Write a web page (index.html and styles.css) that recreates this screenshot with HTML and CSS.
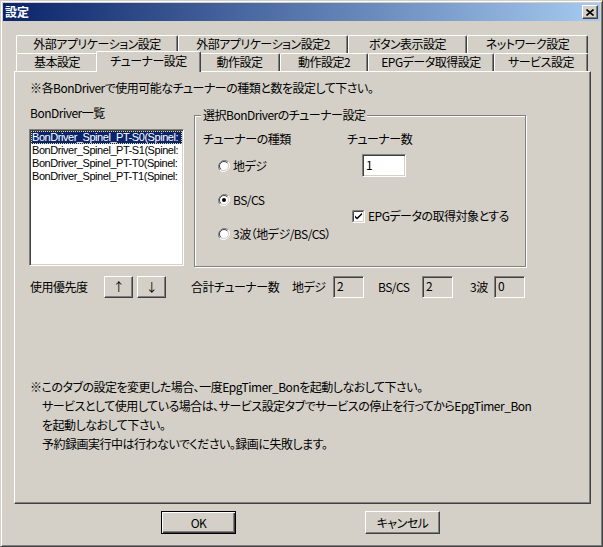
FILE: index.html
```html
<!DOCTYPE html>
<html lang="ja">
<head>
<meta charset="utf-8">
<title>設定</title>
<link rel="stylesheet" href="styles.css">
</head>
<body>
<div class="window">
  <div class="titlebar">
    <span class="title">設定</span>
    <div class="close"><svg width="8" height="7" viewBox="0 0 8 7"><path d="M0.5 0.5 L7.5 6.5 M7.5 0.5 L0.5 6.5" stroke="#000" stroke-width="1.6" fill="none"/></svg></div>
  </div>
  <div class="client">
    <div class="tabctl">
      <div class="tabrow">
        <div class="tab t-ext1">外部アプリケーション設定</div>
        <div class="tab t-ext2">外部アプリケーション設定2</div>
        <div class="tab t-btn">ボタン表示設定</div>
        <div class="tab t-net">ネットワーク設定</div>
      </div>
      <div class="tabrow">
        <div class="tab t-basic">基本設定</div>
        <div class="tab t-tuner selected">チューナー設定</div>
        <div class="tab t-act">動作設定</div>
        <div class="tab t-act2">動作設定2</div>
        <div class="tab t-epg">EPGデータ取得設定</div>
        <div class="tab t-svc">サービス設定</div>
      </div>
      <div class="panel">
        <div class="intro">※各BonDriverで使用可能なチューナーの種類と数を設定して下さい。</div>
        <div class="main">
          <div class="leftcol">
            <div class="label">BonDriver一覧</div>
            <div class="listbox">
              <div class="item sel">BonDriver_Spinel_PT-S0(Spinel:</div>
              <div class="item">BonDriver_Spinel_PT-S1(Spinel:</div>
              <div class="item">BonDriver_Spinel_PT-T0(Spinel:</div>
              <div class="item">BonDriver_Spinel_PT-T1(Spinel:</div>
            </div>
          </div>
          <div class="group">
            <div class="legend">選択BonDriverのチューナー設定</div>
            <div class="gcol gleft">
              <div class="label">チューナーの種類</div>
              <div class="radio r1">
                <svg width="12" height="12" viewBox="0 0 12 12"><path d="M10.2 1.8 A6 6 0 0 0 1.8 10.2" fill="none" stroke="#808080"/><path d="M1.8 10.2 A6 6 0 0 0 10.2 1.8" fill="none" stroke="#fff"/><circle cx="6" cy="6" r="4.5" fill="#fff"/><path d="M9.2 2.8 A4.5 4.5 0 0 0 2.8 9.2" fill="none" stroke="#404040"/><path d="M2.8 9.2 A4.5 4.5 0 0 0 9.2 2.8" fill="none" stroke="#d4d0c8"/></svg>
                <span>地デジ</span>
              </div>
              <div class="radio">
                <svg width="12" height="12" viewBox="0 0 12 12"><path d="M10.2 1.8 A6 6 0 0 0 1.8 10.2" fill="none" stroke="#808080"/><path d="M1.8 10.2 A6 6 0 0 0 10.2 1.8" fill="none" stroke="#fff"/><circle cx="6" cy="6" r="4.5" fill="#fff"/><path d="M9.2 2.8 A4.5 4.5 0 0 0 2.8 9.2" fill="none" stroke="#404040"/><path d="M2.8 9.2 A4.5 4.5 0 0 0 9.2 2.8" fill="none" stroke="#d4d0c8"/><circle cx="6" cy="6" r="2" fill="#000"/></svg>
                <span>BS/CS</span>
              </div>
              <div class="radio">
                <svg width="12" height="12" viewBox="0 0 12 12"><path d="M10.2 1.8 A6 6 0 0 0 1.8 10.2" fill="none" stroke="#808080"/><path d="M1.8 10.2 A6 6 0 0 0 10.2 1.8" fill="none" stroke="#fff"/><circle cx="6" cy="6" r="4.5" fill="#fff"/><path d="M9.2 2.8 A4.5 4.5 0 0 0 2.8 9.2" fill="none" stroke="#404040"/><path d="M2.8 9.2 A4.5 4.5 0 0 0 9.2 2.8" fill="none" stroke="#d4d0c8"/></svg>
                <span>3波（地デジ/BS/CS）</span>
              </div>
            </div>
            <div class="gcol gright">
              <div class="label">チューナー数</div>
              <div class="edit white">1</div>
              <div class="check">
                <svg width="13" height="13" viewBox="0 0 13 13"><rect x="0" y="0" width="13" height="13" fill="#fff"/><path d="M0.5 12.5 V0.5 H12.5" fill="none" stroke="#808080"/><path d="M1.5 11.5 V1.5 H11.5" fill="none" stroke="#404040"/><path d="M0.5 12.5 H12.5 V0.5" fill="none" stroke="#fff"/><path d="M1.5 11.5 H11.5 V1.5" fill="none" stroke="#d4d0c8"/><path d="M3 5.5 L5 7.5 L10 2.8 V4.8 L5 9.5 L3 7.5 Z" fill="#000"/></svg>
                <span>EPGデータの取得対象とする</span>
              </div>
            </div>
          </div>
        </div>
        <div class="bottomrow">
          <span class="c-prio">使用優先度</span>
          <div class="btn small">↑</div>
          <div class="btn small down">↓</div>
          <span class="c-total">合計チューナー数</span>
          <span class="c-tr">地デジ</span>
          <div class="edit count">2</div>
          <span class="c-bs">BS/CS</span>
          <div class="edit count">2</div>
          <span class="c-3">3波</span>
          <div class="edit count">0</div>
        </div>
        <div class="notes">
          <div>※このタブの設定を変更した場合、一度EpgTimer_Bonを起動しなおして下さい。</div>
          <div class="indent">サービスとして使用している場合は、サービス設定タブでサービスの停止を行ってからEpgTimer_Bon</div>
          <div class="indent">を起動しなおして下さい。</div>
          <div class="indent">予約録画実行中は行わないでください。録画に失敗します。</div>
        </div>
      </div>
    </div>
    <div class="buttons">
      <div class="btn dlg default">OK</div>
      <div class="btn dlg cancel">キャンセル</div>
    </div>
  </div>
</div>
</body>
</html>
```

FILE: styles.css
```css
* { box-sizing: border-box; }
html, body { margin: 0; padding: 0; }
body {
  background: #d4d0c8;
  font-family: "Noto Sans CJK JP", sans-serif;
  font-size: 12px;
  line-height: 14px;
  letter-spacing: -0.5px;
  color: #000;
  font-feature-settings: "palt";
}

.window {
  width: 603px;
  height: 547px;
  border: 1px solid;
  border-color: #d4d0c8 #404040 #404040 #d4d0c8;
  box-shadow: inset 1px 1px #fff, inset -1px -1px #808080;
  padding: 2px;
  background: #d4d0c8;
  display: flex;
  flex-direction: column;
}

.titlebar {
  height: 18px;
  flex: none;
  background: linear-gradient(to right, #0a246a, #a6caf0);
  display: flex;
  align-items: center;
  justify-content: space-between;
  padding: 0 2px 0 2px;
}
.title {
  color: #fff;
  font-weight: bold;
  font-size: 12px;
  letter-spacing: 0;
}
.close {
  width: 16px;
  height: 14px;
  background: #d4d0c8;
  border: 1px solid;
  border-color: #fff #404040 #404040 #fff;
  box-shadow: inset -1px -1px #808080;
  display: flex;
  align-items: center;
  justify-content: center;
}
.close svg { display: block; }

.client {
  flex: 1;
  padding: 14px 0 0 11px;
  display: flex;
  flex-direction: column;
}

.tabctl {
  width: 577px;
  display: flex;
  flex-direction: column;
}
.tabrow {
  display: flex;
  height: 18px;
  padding: 0 3px 0 2px;
}
.tab {
  height: 18px;
  border-top: 1px solid #fff;
  border-left: 1px solid #fff;
  border-right: 1px solid #404040;
  box-shadow: inset -1px 0 #808080;
  border-radius: 2px 2px 0 0;
  text-align: center;
  line-height: 16px;
  white-space: nowrap;
  background: #d4d0c8;
}
.t-ext1 { width: 162px; }
.t-ext2 { width: 170px; }
.t-btn { width: 119px; }
.t-net { width: 121px; }
.t-basic { width: 82px; }
.t-tuner { width: 101px; }
.t-act { width: 81px; }
.t-act2 { width: 88px; }
.t-epg { width: 126px; }
.t-svc { width: 94px; }
.tab.selected {
  position: relative;
  z-index: 1;
  width: 105px;
  height: 21px;
  margin: -2px -2px 0 -2px;
  line-height: 18px;
}

.panel {
  height: 433px;
  border: 1px solid;
  border-color: #fff #404040 #404040 #fff;
  box-shadow: inset -1px -1px #808080;
  padding: 9px 0 0 15px;
}

.main {
  display: flex;
  margin-top: 11px;
}
.leftcol {
  width: 155px;
  margin-left: -1px;
}
.leftcol .label { padding-left: 1px; }
.listbox {
  margin-top: 9px;
  width: 155px;
  height: 137px;
  background: #fff;
  border: 1px solid;
  border-color: #808080 #fff #fff #808080;
  box-shadow: inset 1px 1px #404040, inset -1px -1px #d4d0c8;
  padding: 1px 1px;
  overflow: hidden;
  font-family: "Liberation Sans", sans-serif;
  font-size: 11px;
  letter-spacing: -0.45px;
}
.item {
  height: 13px;
  line-height: 13px;
  white-space: nowrap;
  padding-left: 1px;
  overflow: hidden;
}
.item.sel {
  background: #0a246a;
  color: #fff;
  outline: 1px dotted #e8d890;
  outline-offset: -1px;
}

.group {
  position: relative;
  margin: 9px 0 0 10px;
  width: 332px;
  height: 152px;
  border: 1px solid #808080;
  box-shadow: inset 1px 1px #fff, 1px 1px #fff;
  padding: 16px 0 0 8px;
  display: flex;
}
.legend {
  position: absolute;
  top: -8px;
  left: 6px;
  padding: 0 2px;
  background: #d4d0c8;
}
.gleft { width: 144px; }
.radio {
  display: flex;
  align-items: center;
  gap: 3px;
  height: 14px;
  margin: 20px 0 0 15px;
}
.radio.r1 { margin-top: 13px; }
.radio svg { display: block; flex: none; }
.gright { flex: 1; }
.edit {
  border: 1px solid;
  border-color: #808080 #fff #fff #808080;
  box-shadow: inset 1px 1px #404040, inset -1px -1px #d4d0c8;
  background: #d4d0c8;
  padding: 3px 0 0 3px;
  line-height: 14px;
}
.edit.white {
  background: #fff;
  width: 44px;
  height: 23px;
  margin: 8px 0 0 15px;
}
.check {
  display: flex;
  align-items: center;
  gap: 3px;
  height: 14px;
  margin: 32px 0 0 5px;
}
.check svg { display: block; flex: none; }

.bottomrow {
  display: flex;
  align-items: center;
  height: 22px;
  margin-top: 9px;
}
.bottomrow span { white-space: nowrap; }
.c-prio { width: 74px; }
.c-total { width: 101px; margin-left: 25px; }
.c-tr { width: 41px; }
.c-bs { width: 44px; margin-left: 14px; }
.c-3 { width: 24px; margin-left: 17px; }
.edit.count { width: 31px; height: 22px; padding-top: 2px; }

.btn {
  background: #d4d0c8;
  border: 1px solid;
  border-color: #fff #404040 #404040 #fff;
  box-shadow: inset -1px -1px #808080;
  display: flex;
  align-items: center;
  justify-content: center;
}
.btn.small { width: 29px; height: 22px; }
.btn.small.down { margin-left: 4px; }

.notes {
  margin-top: 79px;
  line-height: 19px;
}
.notes .indent { padding-left: 12px; }

.buttons {
  display: flex;
  margin-top: 7px;
  padding-left: 147px;
}
.btn.dlg { width: 75px; height: 23px; }
.btn.default {
  border: 1px solid #000;
  box-shadow: inset 1px 1px #fff, inset -1px -1px #404040, inset -2px -2px #808080;
}
.btn.cancel { margin-left: 129px; }
```
